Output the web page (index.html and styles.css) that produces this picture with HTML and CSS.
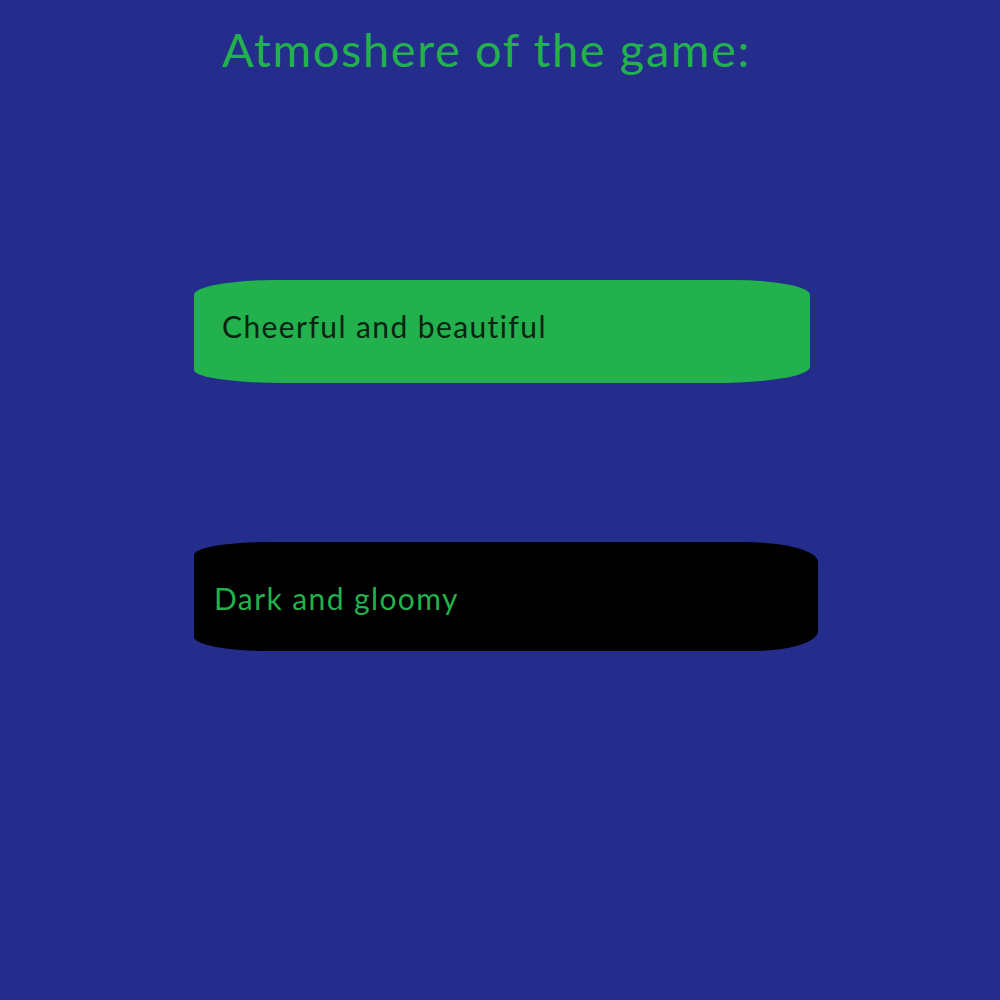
FILE: index.html
```html
<!DOCTYPE html>
<html>
<head>
<meta charset="utf-8">
<link rel="stylesheet" href="styles.css">
</head>
<body>
<main class="page">
  <h1 class="title">Atmoshere of the game:</h1>
  <div class="options">
    <button class="option option-light">Cheerful and beautiful</button>
    <button class="option option-dark">Dark and gloomy</button>
  </div>
</main>
</body>
</html>
```
FILE: styles.css
```css
html, body {
  margin: 0;
  padding: 0;
  background: #252d8c;
  height: 100%;
}
.page {
  font-family: Lato, "Open Sans", sans-serif;
  padding-left: 194px;
  display: flex;
  flex-direction: column;
}
.title {
  margin: 26px 0 0 28px;
  font-size: 47px;
  line-height: 47px;
  letter-spacing: 1.6px;
  font-weight: normal;
  color: #22b14c;
}
.options {
  display: flex;
  flex-direction: column;
  align-items: flex-start;
  margin-top: 207px;
  gap: 159px;
}
.option {
  border: none;
  font-family: inherit;
  font-size: 30px;
  letter-spacing: 1.4px;
  display: flex;
  align-items: center;
  text-align: left;
  cursor: pointer;
}
.option-light {
  width: 616px;
  height: 103px;
  padding: 0 0 12px 28px;
  background: #22b14c;
  color: #0a2412;
  border-radius: 80px 75px 95px 90px / 15px 15px 16px 13px;
}
.option-dark {
  width: 624px;
  height: 109px;
  padding: 2px 0 0 20px;
  background: #000;
  color: #22b14c;
  border-radius: 75px 75px 65px 75px / 13px 20px 20px 14px;
}
```
